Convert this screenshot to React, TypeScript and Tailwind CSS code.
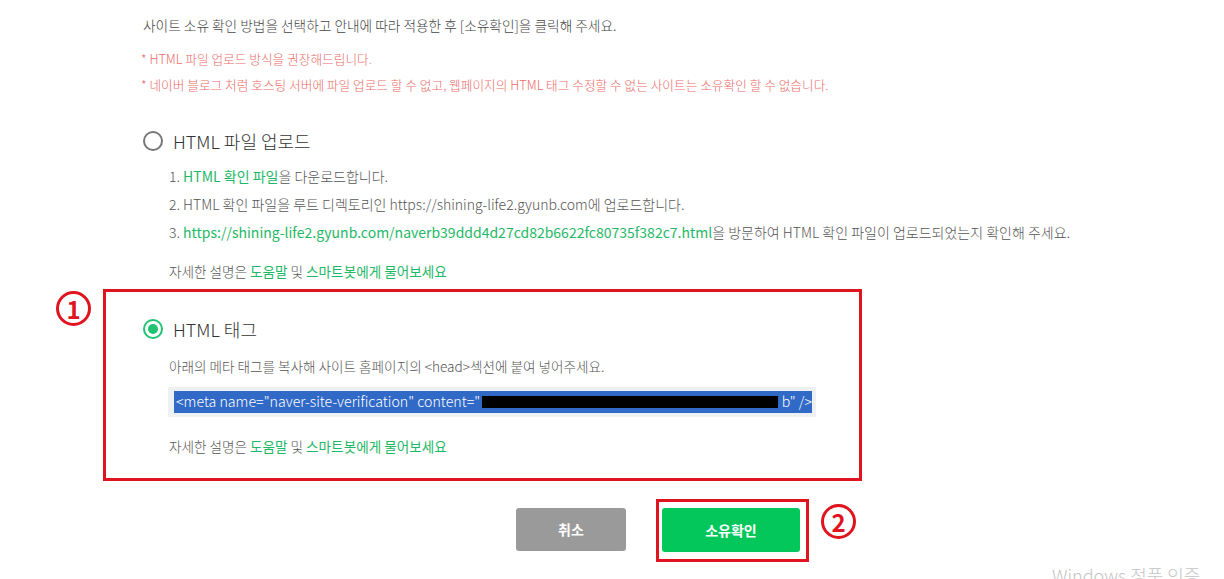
import React from "react";

const font = { fontFamily: '"Noto Sans CJK KR", "Noto Sans", sans-serif' };

function Radio({ checked }: { checked?: boolean }) {
    return checked ? (
        <span className="flex h-[20px] w-[20px] items-center justify-center rounded-full border-2 border-[#1ec472]">
            <span className="h-[10px] w-[10px] rounded-full bg-[#1ec472]" />
        </span>
    ) : (
        <span className="h-[20px] w-[20px] rounded-full border-2 border-[#777]" />
    );
}

function Help() {
    return (
        <p className="text-[13.6px] leading-[20px] font-light text-[#555]">
            자세한 설명은 <span className="font-normal text-[#1eb866]">도움말</span> 및{" "}
            <span className="font-normal text-[#1eb866]">스마트봇에게 물어보세요</span>
        </p>
    );
}

function Badge({ n }: { n: string }) {
    return (
        <span className="flex h-[35px] w-[35px] items-center justify-center rounded-full border-[3px] border-[#e0141e] text-[24px] font-bold leading-none text-[#e0141e]">
            {n}
        </span>
    );
}

export default function App() {
    return (
        <div style={font} className="relative h-[579px] w-[1224px] overflow-hidden bg-white text-[#333]">
            <div className="pl-[143px] pt-[15px]">
                <p className="text-[13.7px] leading-[20px] font-light text-[#444]">
                    사이트 소유 확인 방법을 선택하고 안내에 따라 적용한 후 [소유확인]을 클릭해 주세요.
                </p>
                <div className="mt-[15px] flex flex-col gap-[8px] text-[12.7px] leading-[18px] font-light text-[#ec6a68]">
                    <p className="-ml-[2px]">* HTML 파일 업로드 방식을 권장해드립니다.</p>
                    <p className="-ml-[2px]">
                        * 네이버 블로그 처럼 호스팅 서버에 파일 업로드 할 수 없고, 웹페이지의 HTML 태그 수정할 수 없는 사이트는 소유확인 할 수 없습니다.
                    </p>
                </div>

                <div className="mt-[35px] flex items-center gap-[10px]">
                    <Radio />
                    <span className="text-[18px] leading-[24px] font-light text-[#333]">HTML 파일 업로드</span>
                </div>
                <ol className="ml-[26px] mt-[13px] flex flex-col gap-[8px] text-[14px] leading-[20px] font-light text-[#555]">
                    <li>
                        1. <span className="font-normal text-[#1eb866]">HTML 확인 파일</span>을 다운로드합니다.
                    </li>
                    <li>2. HTML 확인 파일을 루트 디렉토리인 https://shining-life2.gyunb.com에 업로드합니다.</li>
                    <li className="whitespace-nowrap">
                        3.{" "}
                        <span className="font-normal text-[#1eb866]">
                            https://shining-life2.gyunb.com/naverb39ddd4d27cd82b6622fc80735f382c7.html
                        </span>
                        을 방문하여 HTML 확인 파일이 업로드되었는지 확인해 주세요.
                    </li>
                </ol>
                <div className="ml-[26px] mt-[19px]">
                    <Help />
                </div>
            </div>

            <div className="mt-[8px] flex items-start">
                <div className="ml-[56px] mt-[2px]">
                    <Badge n="1" />
                </div>
                <div className="ml-[12px] h-[192px] w-[759px] border-[3px] border-[#e0141e] pl-[37px] pt-[25px]">
                    <div className="flex items-center gap-[10px]">
                        <Radio checked />
                        <span className="text-[18px] leading-[24px] font-light text-[#333]">HTML 태그</span>
                    </div>
                    <p className="ml-[26px] mt-[15px] text-[13.6px] leading-[20px] font-light text-[#555]">
                        아래의 메타 태그를 복사해 사이트 홈페이지의 &lt;head&gt;섹션에 붙여 넣어주세요.
                    </p>
                    <div className="ml-[25px] mt-[11px] w-[648px] bg-[#eef1f4] py-[4px] pl-[6px] pr-[4px]">
                        <div className="flex h-[22px] items-center whitespace-nowrap bg-[#3169c6] pl-[2px] text-[14.2px] font-light text-white">
                            <span>&lt;meta name="naver-site-verification" content="</span>
                            <span className="ml-[2px] h-[12px] w-[302px] bg-black" />
                            <span className="ml-[4px]">b" /&gt;</span>
                        </div>
                    </div>
                    <div className="ml-[26px] mt-[19px]">
                        <Help />
                    </div>
                </div>
            </div>

            <div className="mt-[18px] flex items-start">
                <button className="ml-[516px] mt-[9px] h-[43px] w-[110px] rounded-[3px] bg-[#9a9a9a] text-[14px] font-bold text-white">
                    취소
                </button>
                <div className="ml-[30px] border-[3px] border-[#e0141e] pb-[7px] pl-[3px] pr-[6px] pt-[6px]">
                    <button className="h-[44px] w-[138px] rounded-[3px] bg-[#03c75a] text-[14px] font-bold text-white">
                        소유확인
                    </button>
                </div>
                <div className="ml-[12px] mt-[5px]">
                    <Badge n="2" />
                </div>
            </div>

            <span className="absolute left-[1052px] top-[562px] whitespace-nowrap text-[18px] font-light text-[#c4c4c4]">
                Windows 정품 인증
            </span>
        </div>
    );
}
